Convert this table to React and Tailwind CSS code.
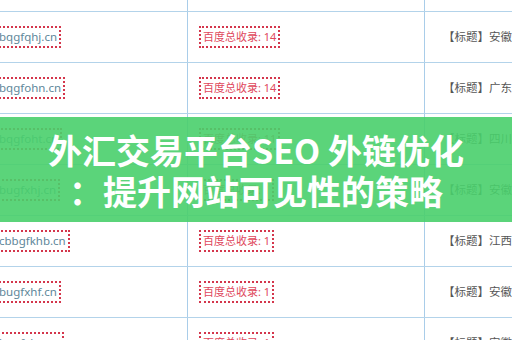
import React from "react";

const rows = [
  { site: "", count: "", title: "" },
  { site: "bqgfqhj.cn", count: "14", title: "安徽新" },
  { site: "bqgfohn.cn", count: "14", title: "广东汽" },
  { site: "bqgfoht.cn", count: "11", title: "四川天" },
  { site: "bugfxhj.cn", count: "1", title: "安徽服" },
  { site: "cbbgfkhb.cn", count: "1", title: "江西铁" },
  { site: "bugfxhf.cn", count: "1", title: "安徽铁" },
  { site: "bqgfxhn.cn", count: "1", title: "安徽新" },
];

const Row = ({ row }) => {
  return (
    <div className="flex h-[51px] border-b border-[#b3d3ea]">
      {/* site */}
      <div className="w-[228px] shrink-0 flex items-center border-r border-[#a9cde9]">
        {row.site && (
          <span className="ml-[10px] pl-[27px] pr-[2px] h-[22px] flex items-center border-2 border-dotted border-[#d4364c] text-[11.5px] text-[#60879a] whitespace-nowrap">
            {row.site}
          </span>
        )}
      </div>
      {/* baidu count */}
      <div className="w-[237px] shrink-0 flex items-center border-r border-[#a9cde9]">
        {row.count && (
          <span className="ml-[11px] px-[2px] h-[22px] flex items-center border-2 border-dotted border-[#d4364c] text-[11px] text-[#e0485c] whitespace-nowrap">
            百度总收录: {row.count}
          </span>
        )}
      </div>
      {/* title */}
      <div className="flex-1 flex items-center pl-[18px] text-[11.5px] text-[#555] whitespace-nowrap">
        {row.title && <span>【标题】{row.title}</span>}
      </div>
    </div>
  );
};

export default function App() {
  return (
    <div
      className="relative w-[512px] h-[340px] overflow-hidden bg-white"
      style={{ fontFamily: '"Noto Sans", "Noto Sans CJK SC", sans-serif' }}
    >
      <div className="-ml-[40px] -mt-[39px] w-[600px]">
        {rows.map((row, i) => (
          <Row key={i} row={row} />
        ))}
      </div>

      {/* banner over the table */}
      <div className="absolute left-0 right-0 top-[117px] h-[105px] bg-[#49cf6c]/90 flex items-center justify-center">
        <h1
          className="text-white text-[34px] font-bold leading-[41px] text-center whitespace-nowrap"
          style={{ fontFamily: '"Noto Sans CJK SC", "Noto Sans", sans-serif' }}
        >
          外汇交易平台SEO 外链优化
          <br />
          ：提升网站可见性的策略
        </h1>
      </div>
    </div>
  );
}
